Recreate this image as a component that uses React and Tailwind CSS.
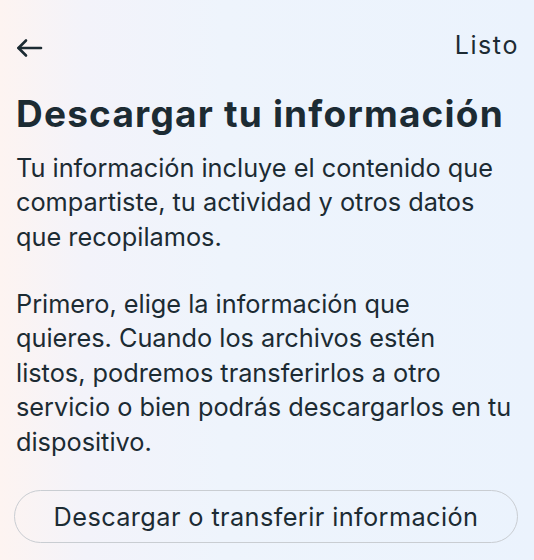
import React from 'react';

export default function App() {
  return (
    <div
      className="w-[534px] h-[560px] overflow-hidden bg-[linear-gradient(90deg,#fdf4f1_0%,#f3f3fa_16%,#eef4fc_42%,#ebf3fd_100%)] text-[#1c2b33]"
      style={{ fontFamily: 'Inter, "Open Sans", sans-serif' }}
    >
      {/* top bar */}
      <div className="flex justify-between pl-4 pr-[16px] pt-[30px] h-[60px]">
        <button className="mt-[8px] w-[27px] h-[20px]">
          <svg width="27" height="20" viewBox="0 0 27 20" fill="none" stroke="#1c2b33" strokeWidth="2.6" strokeLinecap="round" strokeLinejoin="round">
            <path d="M2.5 10h22.5" />
            <path d="M10 2.5 2.5 10l7.5 7.5" />
          </svg>
        </button>
        <span className="text-[25px] leading-[30px] tracking-[1.6px] -mr-[1px]">Listo</span>
      </div>

      <div className="px-4">
        <h1 className="mt-[31.5px] text-[37px] leading-[44px] font-bold tracking-[1.2px] whitespace-nowrap">
          Descargar tu información
        </h1>

        <p className="mt-[15px] w-[520px] text-[25.3px] leading-[34.5px] whitespace-nowrap">
          Tu información incluye el contenido que<br />
          compartiste, tu actividad y otros datos<br />
          que recopilamos.
        </p>

        <p className="mt-[32.5px] w-[520px] text-[25.3px] leading-[34.5px] whitespace-nowrap">
          Primero, elige la información que<br />
          quieres. Cuando los archivos estén<br />
          listos, podremos transferirlos a otro<br />
          servicio o bien podrás descargarlos en tu<br />
          dispositivo.
        </p>

        <button className="mt-[31px] w-[504px] -ml-[2px] h-[53px] rounded-full border border-[#c9cdd2] text-[25.3px] tracking-[0.4px] flex items-center justify-center">
          Descargar o transferir información
        </button>
      </div>
    </div>
  );
}
